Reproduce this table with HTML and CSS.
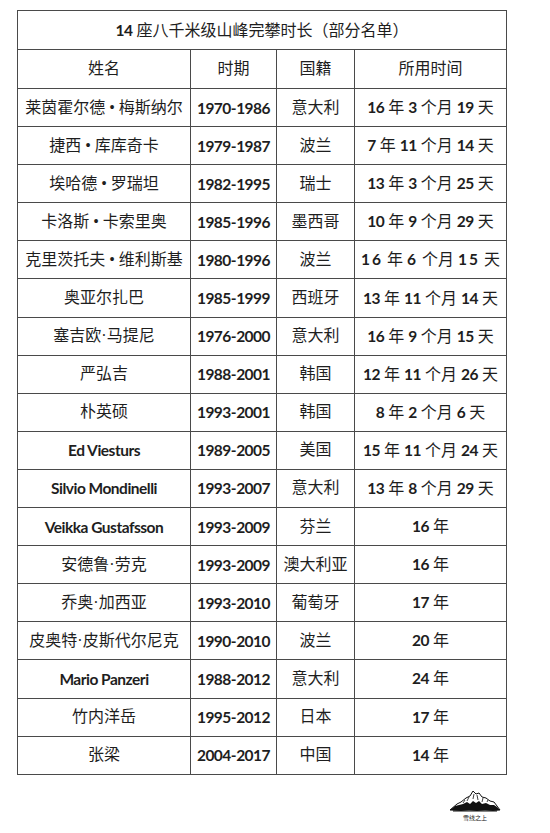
FILE: index.html
```html
<!DOCTYPE html>
<html lang="zh">
<head>
<meta charset="utf-8">
<link rel="stylesheet" href="styles.css">
</head>
<body>
<div class="page">
  <table class="grid">
    <colgroup>
      <col class="c1"><col class="c2"><col class="c3"><col class="c4">
    </colgroup>
    <tr class="title"><td colspan="4"><span class="n">14</span> 座八千米级山峰完攀时长（部分名单）</td></tr>
    <tr class="head"><td>姓名</td><td>时期</td><td>国籍</td><td>所用时间</td></tr>
    <tr><td>莱茵霍尔德 • 梅斯纳尔</td><td class="n">1970-1986</td><td>意大利</td><td><span class="n">16</span> 年 <span class="n">3</span> 个月 <span class="n">19</span> 天</td></tr>
    <tr><td>捷西 • 库库奇卡</td><td class="n">1979-1987</td><td>波兰</td><td><span class="n">7</span> 年 <span class="n">11</span> 个月 <span class="n">14</span> 天</td></tr>
    <tr><td>埃哈德 • 罗瑞坦</td><td class="n">1982-1995</td><td>瑞士</td><td><span class="n">13</span> 年 <span class="n">3</span> 个月 <span class="n">25</span> 天</td></tr>
    <tr><td>卡洛斯 • 卡索里奥</td><td class="n">1985-1996</td><td>墨西哥</td><td><span class="n">10</span> 年 <span class="n">9</span> 个月 <span class="n">29</span> 天</td></tr>
    <tr><td>克里茨托夫 • 维利斯基</td><td class="n">1980-1996</td><td>波兰</td><td class="wide"><span class="m">16</span> 年 <span class="m">6</span> 个月 <span class="m">15</span> 天</td></tr>
    <tr><td>奥亚尔扎巴</td><td class="n">1985-1999</td><td>西班牙</td><td><span class="n">13</span> 年 <span class="n">11</span> 个月 <span class="n">14</span> 天</td></tr>
    <tr><td>塞吉欧·马提尼</td><td class="n">1976-2000</td><td>意大利</td><td><span class="n">16</span> 年 <span class="n">9</span> 个月 <span class="n">15</span> 天</td></tr>
    <tr><td>严弘吉</td><td class="n">1988-2001</td><td>韩国</td><td><span class="n">12</span> 年 <span class="n">11</span> 个月 <span class="n">26</span> 天</td></tr>
    <tr><td>朴英硕</td><td class="n">1993-2001</td><td>韩国</td><td><span class="n">8</span> 年 <span class="n">2</span> 个月 <span class="n">6</span> 天</td></tr>
    <tr><td class="n">Ed Viesturs</td><td class="n">1989-2005</td><td>美国</td><td><span class="n">15</span> 年 <span class="n">11</span> 个月 <span class="n">24</span> 天</td></tr>
    <tr><td class="n">Silvio Mondinelli</td><td class="n">1993-2007</td><td>意大利</td><td><span class="n">13</span> 年 <span class="n">8</span> 个月 <span class="n">29</span> 天</td></tr>
    <tr><td class="n">Veikka Gustafsson</td><td class="n">1993-2009</td><td>芬兰</td><td><span class="n">16</span> 年</td></tr>
    <tr><td>安德鲁·劳克</td><td class="n">1993-2009</td><td>澳大利亚</td><td><span class="n">16</span> 年</td></tr>
    <tr><td>乔奥·加西亚</td><td class="n">1993-2010</td><td>葡萄牙</td><td><span class="n">17</span> 年</td></tr>
    <tr><td>皮奥特·皮斯代尔尼克</td><td class="n">1990-2010</td><td>波兰</td><td><span class="n">20</span> 年</td></tr>
    <tr><td class="n">Mario Panzeri</td><td class="n">1988-2012</td><td>意大利</td><td><span class="n">24</span> 年</td></tr>
    <tr><td>竹内洋岳</td><td class="n">1995-2012</td><td>日本</td><td><span class="n">17</span> 年</td></tr>
    <tr><td>张梁</td><td class="n">2004-2017</td><td>中国</td><td><span class="n">14</span> 年</td></tr>
  </table>
  <div class="footer">
    <div class="logo">
      <svg width="52" height="24" viewBox="0 0 52 24">
        <path d="M1 21 L8 15 L12 13 L17 9 L21 7 L24 2 L27 5 L30 4 L33 8 L37 9 L41 12 L45 13 L48 17 L51 21 Z" fill="#fff" stroke="#111" stroke-width="1"/>
        <path d="M1 21 L6 17 L10 16 L14 15 L18 13 L21 15 L24 12 L27 14 L30 12 L33 15 L37 14 L41 16 L45 16 L48 18 L51 21 L44 22 L36 21 L28 22 L20 21 L12 22 Z" fill="#111"/>
        <path d="M18 12 L20 8 M24 10 L25 5 M29 11 L28 6 M33 13 L34 9 M38 13 L39 11 M14 14 L16 11" stroke="#111" stroke-width="0.8"/>
        <path d="M4 22 L48 22" stroke="#111" stroke-width="1.2"/>
      </svg>
      <div class="logo-text">雪线之上</div>
    </div>
  </div>
</div>
</body>
</html>
```

FILE: styles.css
```css
html, body {
  margin: 0;
  padding: 0;
  background: #fff;
}

.page {
  width: 550px;
  height: 833px;
  padding: 10px 0 0 17px;
  box-sizing: border-box;
}

.grid {
  border-collapse: collapse;
  table-layout: fixed;
  width: 489px;
  font-family: "Liberation Serif", "Noto Sans CJK SC", sans-serif;
  font-size: 16px;
  color: #1e1e1e;
}

.c1 { width: 173px; }
.c2 { width: 86px; }
.c3 { width: 78px; }
.c4 { width: 152px; }

.grid td {
  border: 1.5px solid #4a4a4a;
  text-align: center;
  vertical-align: middle;
  padding: 0;
  white-space: nowrap;
  overflow: hidden;
  line-height: 20px;
}

.grid tr { height: 38.1px; }
.grid tr.title, .grid tr.head { height: 39px; }

.n {
  font-family: "Lato", "Noto Sans CJK SC", sans-serif;
  font-weight: 700;
  font-size: 15.5px;
  letter-spacing: -0.5px;
}

.m {
  font-family: "Lato", sans-serif;
  font-weight: 700;
  font-size: 15.5px;
  letter-spacing: 2px;
}

.footer {
  display: flex;
  justify-content: flex-end;
  padding: 14px 49px 0 0;
}

.logo {
  display: flex;
  flex-direction: column;
  align-items: center;
}

.logo svg { display: block; }

.logo-text {
  font-family: "Noto Sans CJK SC", sans-serif;
  font-size: 6px;
  line-height: 7px;
  color: #222;
  margin-top: 1px;
}
```
